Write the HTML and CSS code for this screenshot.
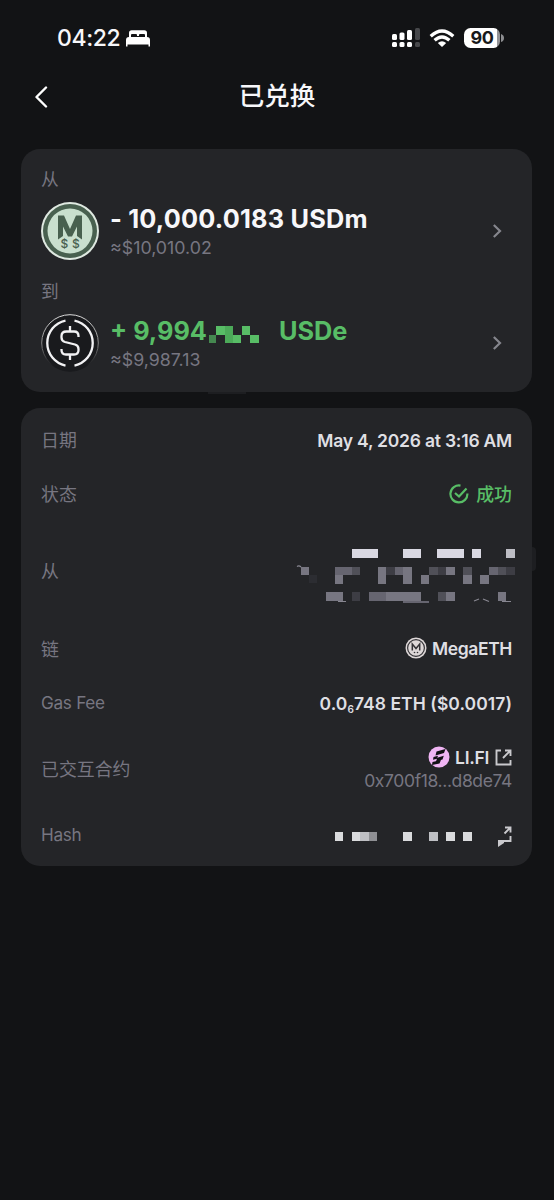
FILE: index.html
```html
<!DOCTYPE html>
<html lang="zh-CN">
<head>
<meta charset="utf-8">
<title>已兑换</title>
<link rel="stylesheet" href="styles.css">
</head>
<body>
<header class="status-bar">
  <div class="clock"><span class="time">04:22</span>
    <svg class="bed" width="24" height="17" viewBox="0 0 24 17" fill="#fff"><path d="M3 7V3Q3 .3 5.700 .3H18.300Q21 .3 21 3V7H19V5Q19 4 18 4H14Q13 4 13 5V6H11V5Q11 4 10 4H6Q5 4 5 5V7ZM0 16.500V10Q0 7 3 7H21Q24 7 24 10V16.500H22.500V14.500H1.500V16.500Z"/></svg>
  </div>
  <div class="indicators">
    <svg class="signal" width="30" height="20" viewBox="0 0 30 20"><g fill="#fff"><rect x="1" y="6" width="5" height="6" rx="1.500"/><rect x="8.500" y="4.500" width="5" height="7.500" rx="1.500"/><rect x="16" y="2" width="5" height="10" rx="1.500"/><rect x="1" y="14" width="5" height="5" rx="1.500"/><rect x="8.500" y="14" width="5" height="5" rx="1.500"/><rect x="16" y="14" width="5" height="5" rx="1.500"/></g><g fill="#47484b"><rect x="24" y="0" width="5" height="12" rx="1.500"/><rect x="24" y="14" width="5" height="5" rx="1.500"/></g></svg>
    <svg class="wifi" width="26" height="19" viewBox="0 0 26 19" fill="none" stroke="#fff" stroke-width="3.300"><path d="M1.700 7.200Q13-3.200 24.300 7.200M5.600 11.300Q13 4.600 20.400 11.300"/><path d="M13 18L8.800 13.900Q13 10.600 17.200 13.900Z" fill="#fff" stroke="none"/></svg>
    <div class="battery"><span>90</span></div>
    <svg class="battery-cap" width="3" height="8" viewBox="0 0 3 8"><path d="M0 0Q3 1 3 4T0 8Z" fill="#8c8d90"/></svg>
  </div>
</header>
<nav class="title-bar">
  <svg class="back" width="14" height="22" viewBox="0 0 14 22" fill="none" stroke="#fff" stroke-width="2.400" stroke-linecap="round" stroke-linejoin="round"><path d="M12 1.500L2.500 11L12 20.500"/></svg>
  <h1>已兑换</h1>
</nav>
<main>
  <section class="card swap">
    <div class="side-label">从</div>
    <div class="token">
      <svg class="coin" width="58" height="58" viewBox="0 0 58 58"><circle cx="29" cy="29" r="29" fill="#dfe9e1"/><circle cx="29" cy="29" r="27" fill="#48604f"/><circle cx="29" cy="29" r="22.500" fill="#c9dfce"/><path d="M17 37.500V13.500H23L29 27L35 13.500H41V37.500L36 34V24.500L31 34.500H27L22 24.500V34Z" fill="#48604f"/><g class="coin-dollar"><text x="23.500" y="45.500">$</text><text x="34.800" y="45.500">$</text></g></svg>
      <div class="amounts"><div class="amount"><span class="sent">- 10,000.0183 USDm</span></div><div class="fiat first">≈$10,010.02</div></div>
      <svg class="chevron" width="10" height="16" viewBox="0 0 10 16"><path d="M1.800 2L8 8L1.800 14"/></svg>
    </div>
    <div class="side-label second">到</div>
    <div class="token">
      <svg class="coin" width="58" height="58" viewBox="0 0 58 58" fill="none"><defs><linearGradient id="rim" x1="0" y1="0" x2="0" y2="1"><stop offset="0" stop-color="#ddd"/><stop offset=".5" stop-color="#888"/><stop offset=".9" stop-color="#191a1d"/></linearGradient></defs><circle cx="29" cy="29" r="28.300" fill="#191a1d" stroke="url(#rim)"/><g stroke="#f2f2f4" stroke-width="2.300"><path d="M24.500 6.500A23 23 0 0 0 24.500 51.500M33.500 6.500A23 23 0 0 1 33.500 51.500"/><path d="M29 12V18M29 40V46M37.500 23V22Q37.500 17.500 33 17.500H25.500Q20.500 17.500 20.500 22V23.500Q20.500 27 24 28L34 30.500Q37.500 31.500 37.500 35V36Q37.500 40.500 33 40.500H25Q20.500 40.500 20.500 36V35"/></g></svg>
      <div class="amounts"><div class="amount received"><span class="known">+ 9,994</span><svg class="digits-mask" width="51" height="18" viewBox="0 0 51 18" shape-rendering="crispEdges"><g fill="#58bd66"><rect x="0" y="9" width="7" height="8" opacity=".65"/><rect x="7" y="0" width="9" height="9"/><rect x="16" y="0" width="8" height="17" fill="#4caa59"/><rect x="24" y="9" width="8" height="8"/><rect x="33" y="0" width="8" height="9"/><rect x="41" y="9" width="9" height="8"/></g></svg><span class="unit">USDe</span></div><div class="fiat fiat-in">≈$9,987.13</div></div>
      <svg class="chevron" width="10" height="16" viewBox="0 0 10 16"><path d="M1.800 2L8 8L1.800 14"/></svg>
    </div>
  </section>
  <section class="card details">
    <div class="row"><span class="label">日期</span><span class="value date">May 4, 2026 at 3:16 AM</span></div>
    <div class="row"><span class="label">状态</span><span class="value success"><svg width="20" height="20" viewBox="0 0 20 20" fill="none" stroke="#58bd66" stroke-width="2.200"><path d="M11.500 1.600A8.500 8.500 0 1 0 18.400 9.500M6 9L10 12.500L17.500 4.500"/></svg><span class="success-text">成功</span></span></div>
    <div class="row address"><span class="label">从</span>
      <svg class="address-mask" width="220" height="56" viewBox="296 548 220 56" shape-rendering="crispEdges">
        <g fill="#d9d8e2"><path d="M352 549h26v9h-26zM403 549h18v9h-18zM437 549h27v9h-27zM472 549h9v9h-9z"/><path d="M506 549h9v9h-9z" fill="#bdbdc4"/></g>
        <g fill="#777681"><path d="M301 567h8v8h-8zM335 575h8v9h-8zM378 567h8v17h-8zM403 567h9v17h-9zM421 575h8v9h-8zM446 567h9v8h-9zM463 575h9v9h-9zM480 575h9v9h-9zM326 592h17v9h-17zM386 592h35v9h-35zM446 592h9v9h-9zM498 592h8v9h-8z"/></g>
        <path fill="#666570" d="M335 567h17v8h-17zM395 567h8v8h-8zM489 567h9v8h-9zM369 592h17v9h-17zM403 601h26v2h-26z"/>
        <path fill="#505058" d="M352 567h8v8h-8zM429 567h9v8h-9zM463 567h9v8h-9zM498 567h8v8h-8zM438 592h8v9h-8z"/>
        <path fill="#3d3d44" d="M386 567h9v8h-9zM438 567h8v8h-8zM506 567h9v8h-9zM352 592h8v9h-8z"/>
        <path fill="#2c2d32" d="M309 575h8v8h-8z"/>
        <path fill="none" stroke="#888791" stroke-width="1.200" shape-rendering="auto" d="M297 566.500Q299 565 301 567M338 601.500H346M474 601L479 599M483 599L489 601.500M502 601.500H511"/>
      </svg>
    </div>
    <div class="row"><span class="label">链</span><span class="value chain"><svg width="22" height="22" viewBox="0 0 22 22"><circle cx="11" cy="11" r="10.500" fill="#ded8d8"/><circle cx="11" cy="11" r="8.400" fill="none" stroke="#343337" stroke-width="1.200"/><path d="M7.300 13.500V7L11 11.500L14.700 7V13.500" fill="none" stroke="#343337" stroke-width="1.500"/><circle cx="9.500" cy="15.500" r=".8" fill="#343337"/><circle cx="12.500" cy="15.500" r=".8" fill="#343337"/></svg><span class="chain-name">MegaETH</span></span></div>
    <div class="row"><span class="label latin">Gas Fee</span><span class="value gas">0.0<span class="zeros">6</span>748 ETH ($0.0017)</span></div>
    <div class="row contract"><span class="label">已交互合约</span>
      <div class="contract-info">
        <div class="value protocol"><svg width="22" height="22" viewBox="0 0 22 22"><circle cx="11" cy="11" r="10.500" fill="#f0b5f4"/><path d="M8.500 5.500L17.500 3L16 7L7.500 9.500ZM5.500 11L10 9.700L9.300 11.700L15.800 9.800L14.500 13.500L8 15.200L9 12.700L5 13.800ZM4.500 16L13 14L11.500 17.500L4 19Z" fill="#111014"/></svg><span class="protocol-name">LI.FI</span><svg class="external" width="17" height="17" viewBox="0 0 17 17" fill="none" stroke="#c9c9cd" stroke-width="1.900"><path d="M6 1.500H1.500V15.500H15.500V11M10 1.500H15.500V7M15.500 1.500L8 9"/></svg></div>
        <div class="contract-address">0x700f18...d8de74</div>
      </div>
    </div>
    <div class="row hash"><span class="label latin">Hash</span>
      <svg class="hash-mask" width="178" height="24" viewBox="334 825 178 24"><g shape-rendering="crispEdges" fill="#dadbdd"><path d="M335 832h8v9h-8zM352 832h8v9h-8zM403 832h9v9h-9zM446 832h9v9h-9zM463 832h9v9h-9z"/><path fill="#bfc0c4" d="M360 832h9v9h-9zM429 832h9v9h-9z"/><path fill="#8f9094" d="M369 832h8v9h-8z"/></g><path d="M505 827.500H510.500V832.500M510 828L504.500 833.500M510.500 836V841H502" fill="none" stroke="#c9c9cd" stroke-width="1.900"/><path d="M498 840H504V843L498 847Z" fill="#c9c9cd"/></svg>
    </div>
  </section>
</main>
</body>
</html>
```
FILE: styles.css
```css
* { box-sizing: border-box; }
body {
  margin: 0;
  min-height: 1200px;
  background: #121315;
  color: #f7f7fa;
  font-family: Inter, "Noto Sans CJK SC", sans-serif;
}
svg { display: block; flex: none; }
.status-bar {
  height: 76px;
  padding: 0 50px 0 57px;
  display: flex;
  align-items: center;
  justify-content: space-between;
}
.clock { display: flex; align-items: center; gap: 6px; }
.time { font-size: 23px; font-weight: 500; letter-spacing: -.4px; }
.indicators { display: flex; align-items: center; }
.wifi { margin-left: 8px; }
.battery {
  width: 36px;
  height: 20px;
  margin-left: 9px;
  border-radius: 6.5px;
  background: linear-gradient(to right, #fff 33px, #939396 33px);
  color: #18191b;
  font-size: 18px;
  line-height: 20px;
  font-weight: 700;
  letter-spacing: -.3px;
  text-align: center;
}
.battery-cap { margin-left: 1px; }
.title-bar {
  height: 73px;
  padding: 0 34px;
  display: grid;
  grid-template-columns: 14px 1fr 14px;
}
.back { margin-top: 10px; }
h1 {
  margin: 0;
  padding-top: 1px;
  font-size: 25.5px;
  line-height: 38px;
  font-weight: 500;
  text-align: center;
}
main {
  padding: 0 22px 0 21px;
  display: flex;
  flex-direction: column;
  gap: 16px;
}
.card { position: relative; border-radius: 19px; background: #242528; }
.swap { height: 243px; padding: 20px 20px 0; }
.swap::after {
  content: "";
  position: absolute;
  left: 187px;
  top: 243px;
  width: 38px;
  height: 2px;
  background: #1d1e21;
}
.side-label { height: 22px; font-size: 17.7px; line-height: 22px; color: #777681; }
.second { margin-top: 21px; }
.token { height: 58px; margin-top: 11px; display: flex; align-items: center; }
.coin-dollar { font-size: 12px; font-weight: 500; fill: #48604f; text-anchor: middle; }
.amounts { flex: 1; padding: 2px 0 0 11px; }
.amount { height: 32px; display: flex; align-items: center; font-size: 25.3px; line-height: 32px; font-weight: 700; white-space: pre; }
.sent { letter-spacing: .2px; }
.received { color: #58bd66; }
.digits-mask { margin: 8px 0 0 2px; }
.unit { margin-left: 19px; }
.fiat { height: 26px; font-size: 17.8px; line-height: 26px; color: #777681; }
.chevron { margin-right: 10px; fill: none; stroke: #85868d; stroke-width: 2.2; }
.details { height: 458px; padding: 5px 20px 0; }
.details::after {
  content: "";
  position: absolute;
  left: 511px;
  top: 139px;
  width: 4px;
  height: 24px;
  border-radius: 0 4px 4px 0;
  background: #1d1e21;
}
.row { height: 54px; display: flex; align-items: center; justify-content: space-between; }
.label { padding-bottom: 3px; font-size: 17.9px; color: #777681; }
.latin { padding-bottom: 1px; font-size: 17.2px; letter-spacing: -.3px; }
.value { font-size: 17.5px; font-weight: 600; color: #dfdfe3; white-space: pre; }
.date { letter-spacing: -.22px; }
.success { display: flex; align-items: center; gap: 7px; color: #58bd66; font-weight: 500; }
.success-text { padding-bottom: 3px; font-size: 17.9px; }
.address { height: 101px; }
.address-mask { margin: 8px -4px 0 0; }
.chain, .protocol { display: flex; align-items: center; gap: 5px; }
.chain { padding-bottom: 2px; letter-spacing: -.4px; }
.gas { letter-spacing: .06px; }
.zeros { font-size: 10px; position: relative; top: 3px; }
.contract { height: 78px; }
.protocol { justify-content: flex-end; height: 24px; letter-spacing: -.3px; }
.external { margin-left: 1px; }
.contract-address { font-size: 17.5px; line-height: 24px; letter-spacing: -.37px; color: #777681; }
.hash-mask { margin-top: 4px; }
```
